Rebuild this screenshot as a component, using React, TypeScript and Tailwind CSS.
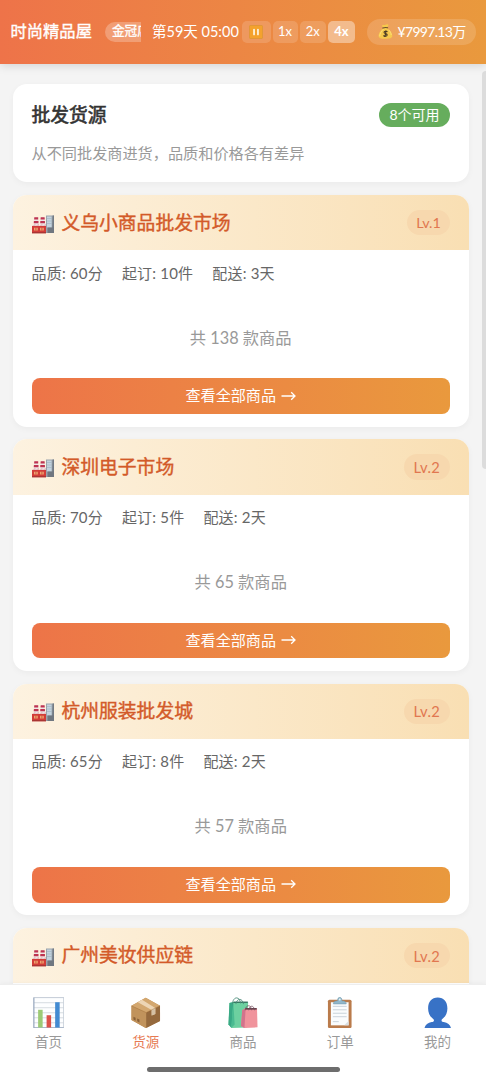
import React from 'react';

type IconProps = { className?: string };

function FactoryIcon({ className }: IconProps) {
  return (
    <svg viewBox="0 0 22 19" className={className} aria-hidden="true">
      <path d="M14 0.5h8V18h-8z" fill="#9aa3ad" />
      <path d="M15 1.5h4.6v11H15z" fill="#c3d3de" />
      <path d="M15 3.5h4.6M15 6h4.6M15 8.500h4.600" stroke="#9fb2c0" strokeWidth="0.6" />
      <path d="M20.600 0.500H22V18h-2z" fill="#737b84" />
      <path d="M15.500 12.500H22V18h-6.500z" fill="#707780" />
      <path d="M2.600 2h3.200l.8 9H1.800zM9 2h3.200l.9 9H8.200z" fill="#eee5e8" />
      <path d="M2.300 2.300h3.900v2.200H2.100zM8.700 2.300h3.900l.2 2.200H8.500zM1.900 6h4.600v2.300H1.700zM8.300 6h4.600l.1 2.300H8.200z" fill="#be3450" />
      <path d="M0 11 3.500 8.500V11L7 8.500V11l3.500-2.500V11L14 8.700V18H0z" fill="#e5bfc1" />
      <path d="M0 11h14v7.200H0z" fill="#d23c38" />
      <path d="M0 17h14v1.200H0z" fill="#a83634" />
      <path d="M2 12.700h3.800v2.700H2zM8 12.700h3.800v2.700H8z" fill="#f1a36d" />
      <path d="M3.900 12.700v2.700M9.900 12.700v2.700" stroke="#b8413a" strokeWidth="0.7" />
    </svg>
  );
}

function MoneyBagIcon({ className }: IconProps) {
  return (
    <svg viewBox="0 0 15 15" className={className} aria-hidden="true">
      <path d="M5.800 4C4.600 2.900 3.400 2 4.300 1.200c1-.7 1.700.1 2.500-.2C8 .5 9.500-.1 10.200.7c.7.900-.6 2-1.400 3.200 3 1.500 5.600 5.300 5.500 8.200-.1 2.200-2.600 2.700-7 2.700s-6.700-.6-6.700-2.800C.6 9.200 2.800 5.500 5.800 4z" fill="#f6c94d" />
      <path d="M1.700 12.200C1.700 9.500 4 6.300 5.800 5M10.800 6c1.300 1.300 2.400 3.300 2.400 5" stroke="#ffe17c" strokeWidth="0.9" fill="none" />
      <path d="M4.900 4.100c1.300-.7 3.200-.8 4.700-.3" stroke="#69502b" strokeWidth="1.100" strokeLinecap="round" fill="none" />
      <path d="M9.500 7.700C8.500 6.900 6.100 7.100 6 8.400c-.1 1.500 3.400 1 3.200 2.600-.2 1.500-2.700 1.500-3.800.5M8.100 6.300 6.900 13" stroke="#4c3c25" strokeWidth="1.100" fill="none" />
    </svg>
  );
}

function PauseIcon({ className }: IconProps) {
  return (
    <svg viewBox="0 0 15 15" className={className} aria-hidden="true">
      <rect x="0.500" y="0.500" width="14" height="14" rx="1" fill="#f4a22d" stroke="#d99331" strokeWidth="0.700" />
      <path d="M5.400 4.800v5.400M9.600 4.800v5.400" stroke="#fff7e7" strokeWidth="1.800" strokeLinecap="round" />
    </svg>
  );
}

function ChartIcon({ className }: IconProps) {
  return (
    <svg viewBox="0 0 32 32" className={className} aria-hidden="true">
      <rect x="0.700" y="0.700" width="30.600" height="30.600" fill="#fdfeff" stroke="#b3bdcb" strokeWidth="0.800" />
      <path d="M1 5.800h30M1 10.900h30M1 16h30M1 21.100h30M1 26.200h30" stroke="#c5ccd4" strokeWidth="0.700" />
      <path d="M1 .7v30.600h30" stroke="#95a5bd" strokeWidth="0.900" fill="none" />
      <path d="M5.200 13h4.600v18H5.200z" fill="#9dca75" />
      <path d="M13.800 18.500h4.600V31h-4.600z" fill="#dc5048" />
      <path d="M22.500 5.300h4.600V31h-4.600z" fill="#438bd2" />
    </svg>
  );
}

function BoxIcon({ className }: IconProps) {
  return (
    <svg viewBox="0 0 32 32" className={className} aria-hidden="true">
      <path d="m16 .8 14.500 8v15.600L16 31.500 1.500 23.400V9z" fill="#bd8a50" />
      <path d="M1.500 9 16.500 15.800v15.700h-.5L1.500 23.400z" fill="#c1935c" />
      <path d="m16.500 15.800 14-7v15.600l-14 7.100z" fill="#95693d" />
      <path d="M1.500 9 15.900.8 30.500 8.800l-14 7z" fill="#d3a76f" />
      <path d="m8 5.300 4.200-2.400 13.500 8.300v6.100l-3.700 1.600v-5.800z" fill="#edd5b4" />
      <path d="m22 13.100 3.700-1.900v6.100L22 18.900z" fill="#d5c0a4" />
      <path d="m3.500 20 2.200 1v3l-2.200-1.100zm3.800 1.800 2.300 1.100v2.900l-2.300-1.100z" fill="#896139" />
      <path d="m1.500 9 15 6.800 14-7" stroke="#9b6a37" strokeWidth="0.400" fill="none" />
    </svg>
  );
}

function BagsIcon({ className }: IconProps) {
  return (
    <svg viewBox="0 0 32 32" className={className} aria-hidden="true">
      <path d="m2.500 6 4-1 15 .6-1.400 25.300-15.300.5L1.500 28z" fill="#6dd0a0" />
      <path d="m2.500 6 4-1-2 26.400L1.500 28z" fill="#39a985" />
      <path d="m6.300 5 1.500 23-3.500 3.400z" fill="#4abb91" />
      <path d="M6.500 5.300h14.700" stroke="#286854" strokeWidth="1.300" />
      <path d="M5.500 7.200C6-1 13.200-1.100 13.700 6.500M9 7.200C10 1 15.700.7 16.800 7.200" stroke="#4c8b7a" strokeWidth="0.900" fill="none" />
      <path d="m15.500 13.500 3.500-2.200 11.500.3.500 19.200-13.300.7-3.500-2z" fill="#f0939c" />
      <path d="m15.500 13.500 3.500-2.200-1.300 20.200-3.500-2z" fill="#d2738c" />
      <path d="M18.500 12h11.700" stroke="#64404b" strokeWidth="1.700" />
      <path d="M18.500 13.500c.5-6 6-6.300 6.500 0M22 13.500c.7-5.500 5.500-5.500 6 0" stroke="#775260" strokeWidth="0.800" fill="none" />
    </svg>
  );
}

function ClipboardIcon({ className }: IconProps) {
  return (
    <svg viewBox="0 0 32 32" className={className} aria-hidden="true">
      <rect x="4" y="2.800" width="24" height="28.800" rx="1.600" fill="#ba7b4b" />
      <path d="M7 5.300h18v23.500H7z" fill="#fafcfd" />
      <path d="M9 9.500h14M9 13h14M9 16.500h14M9 20h14M9 25h6" stroke="#c4ced6" strokeWidth="0.900" />
      <path d="M9.500 7c0-2.500 2-3 4.300-3C13.400-.9 18.700-.9 18.200 4c2.500 0 4.400.5 4.400 3z" fill="#91b7ca" stroke="#739bae" strokeWidth="0.600" />
      <circle cx="16" cy="2.600" r="1" fill="#e9f3f6" />
      <path d="m20.500 28.800 4.500-4.500v4.500z" fill="#d9e0e3" />
    </svg>
  );
}

function PersonIcon({ className }: IconProps) {
  return (
    <svg viewBox="0 0 32 32" className={className} aria-hidden="true">
      <path d="M16 .6c6.200 0 9.800 4.300 9.800 11 0 5-2.300 8.700-5.700 11.200-.7 1.900.2 2.500 2 2.700 3.900.5 6.700 2.700 7.400 6.200h-27c.7-3.500 3.500-5.700 7.400-6.200 1.800-.2 2.700-.8 2-2.700C8.500 20.300 6.200 16.600 6.200 11.600 6.200 4.900 9.800.6 16 .6z" fill="#3872c6" />
    </svg>
  );
}

function ArrowIcon({ className }: IconProps) {
  return (
    <svg viewBox="0 0 15 10" className={className} fill="none" stroke="currentColor" strokeWidth="1.300" aria-hidden="true">
      <path d="M.5 5h13.500M10.200 1.200 14 5l-3.800 3.800" />
    </svg>
  );
}

const suppliers = [
  { name: '义乌小商品批发市场', level: 1, quality: 60, min: 10, days: 3, count: 138 },
  { name: '深圳电子市场', level: 2, quality: 70, min: 5, days: 2, count: 65 },
  { name: '杭州服装批发城', level: 2, quality: 65, min: 8, days: 2, count: 57 },
  { name: '广州美妆供应链', level: 2, quality: 70, min: 6, days: 2, count: 72 },
];

function SupplierCard({ item }: { item: (typeof suppliers)[number] }) {
  return (
    <article className="h-[231.600px] shrink-0 overflow-hidden rounded-[14px] bg-white shadow-[0_2px_6px_rgba(0,0,0,0.04)]">
      <div className="flex h-[55.500px] items-center bg-linear-90 from-[#fdf2e0] to-[#f9dfb3] px-[19px]">
        <FactoryIcon className="mt-[3px] h-[19px] w-[22px]" />
        <h2 className="ml-[8px] text-[18.800px] text-[#d35a29] [-webkit-text-stroke:0.4px_#d35a29]">{item.name}</h2>
        <span className={item.level === 1
          ? 'ml-auto flex h-[25.500px] w-[43px] items-center justify-center rounded-full bg-[#f7d8ae] text-[14.300px] text-[#e17750]'
          : 'ml-auto flex h-[25.500px] w-[46.500px] items-center justify-center rounded-full bg-[#f7d8ae] text-[14.700px] tracking-[0.300px] text-[#e17750]'}>
          Lv.{item.level}
        </span>
      </div>
      <div className="flex h-[45px] items-center gap-[19px] px-[19px] text-[15px] tracking-[0.200px] text-[#666]">
        <span>品质: {item.quality}分</span>
        <span>起订: {item.min}件</span>
        <span>配送: {item.days}天</span>
      </div>
      <div className="flex h-[83px] items-center justify-center pt-[2px] text-[16.300px] text-[#999]">共 {item.count} 款商品</div>
      <button className="mx-[19px] flex h-[35.500px] w-[418.500px] items-center justify-center rounded-[8px] bg-linear-90 from-[#ed7448] to-[#e9993d] pb-[1px] text-[15.100px] text-white">
        查看全部商品<ArrowIcon className="ml-[5px] h-[10px] w-[15px]" />
      </button>
    </article>
  );
}

const tabs = [
  { label: '首页', icon: ChartIcon },
  { label: '货源', icon: BoxIcon, active: true },
  { label: '商品', icon: BagsIcon },
  { label: '订单', icon: ClipboardIcon },
  { label: '我的', icon: PersonIcon },
];

export default function App() {
  return (
    <div className="flex h-[1080px] w-[486px] flex-col overflow-hidden bg-[#f4f4f4] font-[Lato,'Noto_Sans_CJK_SC',sans-serif] whitespace-nowrap">
      <header className="z-10 flex h-[63.500px] shrink-0 items-center bg-linear-90 from-[#ee7349] to-[#e9993d] pl-[10.500px] text-white shadow-[0_2px_9px_rgba(0,0,0,0.13)]">
        <h1 className="w-[94.500px] shrink-0 pb-[1px] text-[16.300px] [-webkit-text-stroke:0.35px_white]">时尚精品屋</h1>
        <div className="w-[36px] shrink-0 overflow-hidden">
          <span className="flex h-[20px] w-[54px] items-center rounded-full bg-white/25 pl-[7px] text-[12.600px] [-webkit-text-stroke:0.3px_white]">金冠店</span>
        </div>
        <span className="ml-[11px] w-[90px] shrink-0 text-[14.500px]">第59天 05:00</span>
        <div className="flex gap-[2px] text-[13px]">
          <button className="flex h-[22px] w-[28.500px] items-center justify-center rounded-[5px] bg-white/15"><PauseIcon className="size-[14px]" /></button>
          <button className="flex h-[22px] w-[25px] items-center justify-center rounded-[5px] bg-white/15">1x</button>
          <button className="flex h-[22px] w-[26.500px] items-center justify-center rounded-[5px] bg-white/15">2x</button>
          <button className="flex h-[22px] w-[27px] items-center justify-center rounded-[5px] bg-white/40 font-bold">4x</button>
        </div>
        <div className="ml-[11.500px] flex h-[26.500px] w-[109.500px] shrink-0 items-center rounded-full bg-white/15 pl-[11px] text-[14px]">
          <MoneyBagIcon className="mr-[5px] size-[15px]" /><span className="pb-[1px] tracking-[-0.680px]">¥7997.13万</span>
        </div>
      </header>

      <main className="flex min-h-0 flex-1 overflow-hidden">
        <div className="ml-[12.500px] flex w-[456.500px] flex-col gap-[12.700px] pt-[20.500px]">
          <section className="h-[98.300px] shrink-0 rounded-[14px] bg-white px-[19px] pt-[18px] shadow-[0_2px_6px_rgba(0,0,0,0.04)]">
            <div className="flex h-[26px] items-center justify-between">
              <h2 className="text-[18.800px] text-[#333] [-webkit-text-stroke:0.6px_#333]">批发货源</h2>
              <span className="flex h-[24px] items-center rounded-full bg-[#66ad5d] px-[10.500px] pb-[1px] text-[14px] text-white">8个可用</span>
            </div>
            <p className="mt-[13.500px] text-[15.170px] leading-[22px] text-[#999]">从不同批发商进货，品质和价格各有差异</p>
          </section>
          {suppliers.map((item) => <SupplierCard key={item.name} item={item} />)}
        </div>
        <div className="mt-[7.500px] ml-auto h-[398px] w-[4px] rounded-l-sm bg-[#dcdcdc]" />
      </main>

      <nav className="z-10 flex h-[96px] shrink-0 flex-col border-t border-[#eee] bg-white shadow-[0_-1px_5px_rgba(0,0,0,0.04)]">
        <div className="grid h-[77px] grid-cols-5 pt-[11.500px]">
          {tabs.map(({ label, icon: Icon, active }) => (
            <button key={label} className={active ? 'flex flex-col items-center text-[#e77a52]' : 'flex flex-col items-center text-[#999]'}>
              <Icon className="size-[31.500px]" />
              <span className="mt-[4px] text-[13.500px] leading-[20px]">{label}</span>
            </button>
          ))}
        </div>
        <div className="mx-auto mt-[5px] h-[5px] w-[193px] rounded-full bg-[#6d6d6d]" />
      </nav>
    </div>
  );
}
